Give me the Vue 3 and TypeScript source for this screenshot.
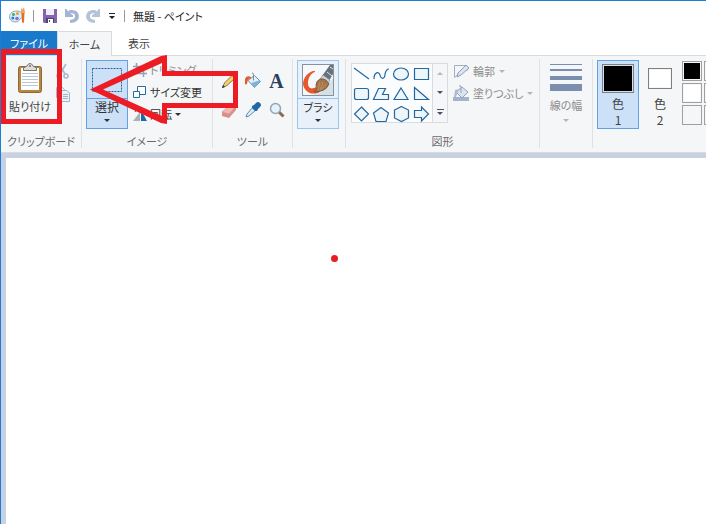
<script setup lang="ts">
import { ref } from 'vue'

interface Shape {
  name: string
  d: string
}

const shapes: Shape[] = [
  { name: '直線', d: 'M2 4L17 15' },
  { name: '曲線', d: 'M2 15C2 8 7 7 8 11C9 16 13 15 13 10C14 6 15 5 17 5' },
  { name: '楕円', d: 'M1.500 10A7.500 6 0 1 0 16.500 10A7.500 6 0 1 0 1.500 10Z' },
  { name: '四角形', d: 'M2.500 4.500H16.500V15.500H2.500Z' },
  { name: '角丸四角形', d: 'M4.500 4.500H14.500Q16.500 4.500 16.500 6.500V13.500Q16.500 15.500 14.500 15.500H4.500Q2.500 15.500 2.500 13.500V6.500Q2.500 4.500 4.500 4.500Z' },
  { name: '多角形', d: 'M6.500 4.500H13.500L10.500 10.500H16.500V15.500H1.500Z' },
  { name: '三角形', d: 'M9 4L16 15.500H2Z' },
  { name: '直角三角形', d: 'M2.500 3.500L16.500 15.500H2.500Z' },
  { name: 'ひし形', d: 'M9.500 3L16.500 10L9.500 17L2.500 10Z' },
  { name: '五角形', d: 'M9 3.500L16.500 9L14 17.500H4L1.500 9Z' },
  { name: '六角形', d: 'M9.500 2.500L16.500 6V14L9.500 17.500L2.500 14V6Z' },
  { name: '右矢印', d: 'M2.500 6.500H9.500V3L16.500 10L9.500 17V13.500H2.500Z' },
]

const palette = ['#000000', '#7f7f7f', '#ffffff', '#c3c3c3', '#f5f6f7', '#f5f6f7']
const activeColor = ref(1)
</script>

<template>
  <div class="window">
    <header class="titlebar">
      <svg class="app-icon" width="18" height="18" viewBox="0 0 18 18">
        <path d="M.5 10C.5 6 4 4 8 4C11 4 13 5 13.500 8C14 11 12 11 11 12C10 14 9 15 6 15C3 15 .5 13 .5 10Z" fill="#d9ecf7" stroke="#85aec8" />
        <circle cx="4.500" cy="7.500" r="1.500" fill="#58a852" />
        <circle cx="8.500" cy="6.500" r="1.500" fill="#e8a02c" />
        <circle cx="3.800" cy="11" r="1.500" fill="#2f7fd0" />
        <circle cx="8" cy="11.500" r="1.800" fill="#8b6fc0" />
        <path d="M12 1L13.500 2.500L14.500 .5L15.500 2L16 6H12Z" fill="#efa65a" />
        <path d="M12.500 6H15.500L15 15Q14 17 13 15Z" fill="#e0702a" />
      </svg>
      <span class="bar"></span>
      <button class="quick" aria-label="上書き保存">
        <svg width="16" height="16" viewBox="0 0 16 16">
          <path d="M1 1H15V15H2L1 14Z" fill="#8563b4" />
          <path d="M4 1H12V7H4Z" fill="#f1edf8" />
          <path d="M4 10H12V15H4Z" fill="#4e4468" />
          <path d="M6 11H11V15H6Z" fill="#fff" />
          <path d="M7 12H8V14H7Z" fill="#4e4468" />
        </svg>
      </button>
      <button class="quick" aria-label="元に戻す">
        <svg width="16" height="16" viewBox="0 0 16 16">
          <path d="M1 1V9H9V7L6 5.500Q11 4.500 11 8.500Q11 11.500 6 12V15Q15 14.500 15 8Q14 1 6 2L4 3.500L2.500 1Z" fill="#a3b5d2" />
        </svg>
      </button>
      <button class="quick" aria-label="やり直し">
        <svg width="16" height="16" viewBox="0 0 16 16">
          <path d="M14 1V9H6V7L9 5.500Q4 4.500 4 8.500Q4 11.500 9 12V15Q0 14.500 0 8Q1 1 9 2L11 3.500L12.500 1Z" fill="#b5c3d9" />
        </svg>
      </button>
      <button class="customize" aria-label="クイック アクセス ツール バーのカスタマイズ">
        <svg width="8" height="8" viewBox="0 0 8 8"><path d="M1 1H7V2H1ZM1 4H7L4 7Z" fill="#222" /></svg>
      </button>
      <span class="bar"></span>
      <h1>無題 - ペイント</h1>
    </header>

    <nav class="tabs">
      <button class="tab file">ファイル</button>
      <button class="tab home">ホーム</button>
      <button class="tab">表示</button>
    </nav>

    <div class="ribbon">
      <section class="group clipboard">
        <div class="body">
          <button class="paste">
            <svg width="28" height="32" viewBox="0 0 28 32">
              <rect x="2.500" y="4.500" width="23" height="26" rx="2" fill="#b98547" stroke="#94682f" />
              <path d="M5 6H23V28H5Z" fill="#fff" />
              <path d="M6 11.500H22M6 14.500H22M6 17.500H22M6 20.500H22M6 23.500H22" stroke="#b8c6d8" />
              <path d="M7.500 8.500V6L11 4Q12 1.500 14 1.500Q16 1.500 17 4L20.500 6V8.500Z" fill="#dcdcda" stroke="#77756c" />
              <circle cx="14" cy="4" r="1" fill="#77756c" />
            </svg>
            <span>貼り付け</span>
          </button>
          <div class="stack">
            <button class="mini" aria-label="切り取り">
              <svg width="16" height="16" viewBox="0 0 16 16" fill="none" stroke="#a9b5ca" stroke-width="1.600">
                <path d="M4 1L10 11M11 1L5 11" /><circle cx="4" cy="13" r="2" /><circle cx="11" cy="13" r="2" />
              </svg>
            </button>
            <button class="mini" aria-label="コピー">
              <svg width="16" height="16" viewBox="0 0 16 16" fill="#edf1f7" stroke="#a5b4cc">
                <path d="M1.500 1.500H7.500L9.500 3.500V11.500H1.500Z" />
                <path d="M6.500 4.500H12L14.500 7V15.500H6.500ZM8 8.500H13M8 10.500H13M8 12.500H13" />
              </svg>
            </button>
          </div>
        </div>
        <h2>クリップボード</h2>
      </section>

      <section class="group image">
        <div class="body">
          <button class="split select">
            <span class="top">
              <svg width="32" height="26" viewBox="0 0 32 26"><rect x="1.500" y="1.500" width="29" height="23" fill="none" stroke="#24649b" stroke-dasharray="2 1" /></svg>
            </span>
            <span class="bottom">選択<i class="caret"></i></span>
          </button>
          <div class="commands">
            <button class="command off">
              <svg width="14" height="14" viewBox="0 0 14 14" fill="none" stroke="#92a1ba" stroke-width="1.500"><path d="M3.500 0V10.500H14M0 3.500H10.500V14M3 11L13 1" /></svg>
              トリミング
            </button>
            <button class="command">
              <svg width="14" height="14" viewBox="0 0 14 14" fill="#fff" stroke="#246ba6"><path d="M4.500 1.500H12.500V9.500H4.500Z" /><path d="M.5 6.500H6.500V12.500H.5Z" /></svg>
              サイズ変更
            </button>
            <button class="command">
              <svg width="14" height="14" viewBox="0 0 14 14"><path d="M7 5V14H0Z" fill="#a9b0b8" /><path d="M8 3L14 14H8Z" fill="#1e6aa7" /><path d="M2 5Q3 1 7 1" fill="none" stroke="#246ba6" /></svg>
              回転<i class="caret"></i>
            </button>
          </div>
        </div>
        <h2>イメージ</h2>
      </section>

      <section class="group tools">
        <div class="body tool-grid">
          <button aria-label="鉛筆">
            <svg width="18" height="18" viewBox="0 0 18 18"><path d="M2.500 15.500L4.500 11L12 3.500L15 6L7 13.500Z" fill="#f5d36a" stroke="#8a7340" /><path d="M2 16L3 13L5 15Z" fill="#333" /><path d="M12 3.500L13.500 2.500L16 5L15 6Z" fill="#d9887d" stroke="#a8685f" stroke-width=".6" /></svg>
          </button>
          <button aria-label="塗りつぶし">
            <svg width="18" height="18" viewBox="0 0 18 18"><path d="M4 8.500L10.500 3.500L16.500 9.500L10.500 15.500Z" fill="#e3f0fa" stroke="#6594bb" /><path d="M7 11L15 8.500L16.500 9.500L10.500 15.500Z" fill="#80b2d8" /><path d="M9.500 8.500V2.500Q9.500 1 8 1" fill="none" stroke="#7a8794" /><path d="M7 5Q2 3 1 7V12Q3 14 3.500 9Q5 6 7 6Z" fill="#e25c29" /></svg>
          </button>
          <button class="letter" aria-label="テキスト">A</button>
          <button aria-label="消しゴム">
            <svg width="18" height="18" viewBox="0 0 18 18"><path d="M2 11L10 4L16 5L9 13Z" fill="#f3b9b1" stroke="#d0958e" stroke-width=".7" /><path d="M2 11L9 13V17L2 15ZM9 13L16 5V9L9 17Z" fill="#dc8f87" /></svg>
          </button>
          <button aria-label="色の選択">
            <svg width="18" height="18" viewBox="0 0 18 18"><path d="M9 6L12 9L5 15L2 16L3 13Z" fill="#d7eefb" stroke="#5b8baa" /><path d="M8 5L10 4L12 2Q14 0 16 2Q18 4 16 6L14 8L13 10L11 10L8 7Z" fill="#2465a5" /></svg>
          </button>
          <button aria-label="拡大鏡">
            <svg width="18" height="18" viewBox="0 0 18 18"><path d="M11 11L15.500 15.500" stroke="#886b55" stroke-width="3" /><circle cx="7.500" cy="7.500" r="5" fill="#e2f3fd" stroke="#98a6b2" stroke-width="1.500" /></svg>
          </button>
        </div>
        <h2>ツール</h2>
      </section>

      <section class="group brush">
        <div class="body">
          <button class="split brushes">
            <span class="top">
              <svg width="32" height="32" viewBox="0 0 32 32">
                <rect x=".5" y=".5" width="31" height="31" fill="#f5f9fc" stroke="#8a9299" />
                <path d="M31 14V31H9L18 29L27 20Z" fill="#d3e0e8" />
                <path d="M13 7C8 6 1 13 1 20C2 28 10 32 18 28L14 23C9 26 6 24 6 19C6 14 9 9 13 8Z" fill="#e6572a" />
                <path d="M31 1V10L27 17L20 12L28 1Z" fill="#69727c" />
                <path d="M28 3L31 5M25 8L30 12" stroke="#dce6ee" />
                <path d="M21 11L28 16L26 20L18 15Z" fill="#cbd3da" stroke="#78838e" stroke-width=".6" />
                <path d="M18 15Q24 14 27 20Q24 28 12 28Q16 25 14 21Q14 17 18 15Z" fill="#a4744b" stroke="#75502f" stroke-width=".8" />
                <path d="M18 18L16 26M21 18L18 26M24 20L20 25" stroke="#c69a70" stroke-width=".8" />
              </svg>
            </span>
            <span class="bottom">ブラシ<i class="caret"></i></span>
          </button>
        </div>
      </section>

      <section class="group shapes">
        <div class="body">
          <div class="gallery">
            <div class="cells">
              <button v-for="shape in shapes" :key="shape.name" :aria-label="shape.name">
                <svg width="20" height="20" viewBox="0 0 20 20"><path :d="shape.d" :fill="shape.d.endsWith('Z') ? '#edf6fa' : 'none'" stroke="#2467a0" stroke-width="1.200" /></svg>
              </button>
            </div>
            <div class="scroll">
              <button aria-label="上へ"><i class="caret up"></i></button>
              <button aria-label="下へ"><i class="caret"></i></button>
              <button aria-label="その他"><i class="line"></i><i class="caret"></i></button>
            </div>
          </div>
          <div class="commands">
            <button class="command off">
              <svg width="16" height="16" viewBox="0 0 16 16"><path d="M12 2.500H1.500V14.500L14 4V8" fill="none" stroke="#a2afc5" /><path d="M4 14L5 10L13 2L16 5L8 12Z" fill="#dce4ef" stroke="#8d9db8" /></svg>
              輪郭<i class="caret"></i>
            </button>
            <button class="command off">
              <svg width="16" height="16" viewBox="0 0 16 16"><path d="M0 12H16V16H0Z" fill="#a4b4cd" /><path d="M3 7L9 2L15 7L9 13Z" fill="#dbe3ee" stroke="#8fa1bd" /><path d="M8 8V2Q8 0 6 1" stroke="#8fa1bd" fill="none" /><path d="M2 5L6 4L3 12H1Z" fill="#aebbd0" /></svg>
              塗りつぶし<i class="caret"></i>
            </button>
          </div>
        </div>
        <h2>図形</h2>
      </section>

      <section class="group stroke">
        <div class="body">
          <button class="size" disabled>
            <svg width="32" height="28" viewBox="0 0 32 28"><path d="M0 1H32V2H0ZM0 6H32V8H0ZM0 13H32V17H0ZM0 21H32V28H0Z" fill="#7b8eaf" /></svg>
            <span>線の幅</span>
            <i class="caret"></i>
          </button>
        </div>
      </section>

      <section class="group colors">
        <div class="body">
          <button class="color" :class="{ active: activeColor === 1 }" @click="activeColor = 1">
            <span class="swatch black"></span><span>色<br />1</span>
          </button>
          <button class="color" :class="{ active: activeColor === 2 }" @click="activeColor = 2">
            <span class="swatch white"></span><span>色<br />2</span>
          </button>
          <div class="palette">
            <button v-for="(tone, index) in palette" :key="index" :style="{ backgroundColor: tone }" :aria-label="`色見本 ${index + 1}`"></button>
          </div>
        </div>
      </section>
    </div>

    <main class="workspace">
      <div class="canvas"></div>
    </main>

    <svg class="marks" width="340" height="270" viewBox="0 0 340 270">
      <rect x="3.500" y="51.500" width="56" height="70" fill="none" stroke="#ed1c24" stroke-width="5" />
      <path fill="#ed1c24" fill-rule="evenodd" d="M90 89.500L161 56L167 55V71H238V108H167V124L161 123ZM103 89.500L162 116V103H233V76H162V63Z" />
      <circle cx="334.500" cy="258.500" r="3.500" fill="#ed1c24" />
    </svg>
  </div>
</template>

<style>
body {
  margin: 0;
  overflow: hidden;
}
</style>

<style scoped>
.window {
  position: relative;
  box-sizing: border-box;
  display: flex;
  flex-direction: column;
  min-height: 100vh;
  overflow: hidden;
  border-top: 1px solid #1a7fd4;
  border-left: 1px solid #1a7fd4;
  background: #fff;
  color: #444;
  font: 11px/16px "Noto Sans CJK JP", sans-serif;
  font-feature-settings: "palt";
}
button {
  box-sizing: border-box;
  margin: 0;
  padding: 0;
  border: 0;
  background: none;
  color: inherit;
  font: inherit;
  font-feature-settings: inherit;
  white-space: nowrap;
}
svg {
  display: block;
  flex: none;
}
h1,
h2 {
  margin: 0;
  font-size: 11px;
  font-weight: 400;
  white-space: nowrap;
}
.titlebar {
  display: flex;
  align-items: center;
  height: 30px;
  padding-left: 8px;
}
.bar {
  width: 1px;
  height: 12px;
  margin: 0 8px 0 6px;
  background: #999;
}
.quick {
  width: 16px;
  margin-right: 6px;
}
.customize {
  width: 8px;
  margin-right: 2px;
}
h1 {
  color: #222;
}
.tabs {
  display: flex;
  height: 24px;
}
.tab {
  width: 54px;
  height: 24px;
}
.file {
  width: 56px;
  background: #1979ca;
  color: #fff;
}
.home {
  width: 55px;
  height: 25px;
  position: relative;
  z-index: 1;
  border: 1px solid #dadbdc;
  border-bottom: 0;
  background: #f5f6f7;
}
.ribbon {
  display: flex;
  box-sizing: border-box;
  height: 98px;
  padding: 3px 0 4px;
  border-top: 1px solid #dadbdc;
  border-bottom: 1px solid #dadbdc;
  background: #f5f6f7;
}
.group {
  box-sizing: border-box;
  display: flex;
  flex: none;
  flex-direction: column;
  justify-content: space-between;
  border-right: 1px solid #e0e1e3;
}
.body {
  display: flex;
  padding: 1px 4px 0;
}
.group h2 {
  color: #6a6a6a;
  line-height: 14px;
  text-align: center;
}
.clipboard {
  width: 81px;
}
.image {
  width: 131px;
}
.tools {
  width: 80px;
}
.brush {
  width: 53px;
}
.shapes {
  width: 194px;
}
.stroke {
  width: 53px;
}
.colors {
  width: 180px;
}
.paste {
  display: flex;
  flex-direction: column;
  align-items: center;
  gap: 4px;
  width: 50px;
  padding-top: 2px;
}
.stack {
  display: flex;
  flex-direction: column;
  gap: 7px;
  padding-top: 3px;
}
.split {
  display: flex;
  flex-direction: column;
  width: 42px;
  height: 69px;
  border: 1px solid #62a2e4;
  background: #cce0f7;
}
.select,
.color {
  font-size: 12px;
}
.top {
  display: flex;
  align-items: center;
  justify-content: center;
  width: 100%;
  height: 37px;
  border-bottom: 1px solid #62a2e4;
}
.bottom {
  display: flex;
  flex-direction: column;
  align-items: center;
  gap: 4px;
  width: 100%;
  color: #333;
}
.caret {
  display: inline-block;
  border: 3px solid transparent;
  border-top-color: currentColor;
  border-bottom: 0;
}
.caret.up {
  border-top: 0;
  border-bottom: 3px solid #b3b8c1;
}
.commands {
  display: flex;
  flex-direction: column;
  gap: 6px;
  padding: 2px 0 0 5px;
}
.command {
  display: flex;
  align-items: center;
  gap: 3px;
  height: 16px;
  color: #333;
}
.command.off {
  color: #8d8d8d;
}
.off .caret {
  border-top-color: #b5b5b5;
}
.tool-grid {
  display: grid;
  grid-template-columns: repeat(3, 18px);
  justify-content: center;
  gap: 11px 6px;
  padding-top: 13px;
}
.letter {
  color: #27405f;
  font: bold 20px/18px "Liberation Serif", serif;
}
.brushes {
  border-color: #98c6f2;
  background: #e8f0fa;
}
.brushes .top {
  border-color: #98c6f2;
}
.shapes .body {
  padding-top: 4px;
  padding-left: 5px;
}
.shapes .commands {
  padding-top: 0;
}
.shapes .command {
  gap: 4px;
}
.gallery {
  box-sizing: border-box;
  display: flex;
  width: 97px;
  height: 60px;
  border: 1px solid #dadbdc;
  background: #fbfcfd;
}
.cells {
  display: grid;
  grid-template-columns: repeat(4, 20px);
  grid-template-rows: repeat(3, 20px);
}
.scroll {
  display: grid;
  flex: 1;
  grid-template-rows: repeat(3, 1fr);
  border-left: 1px solid #dadbdc;
  background: #f5f6f7;
  color: #44526a;
}
.scroll button {
  display: flex;
  flex-direction: column;
  align-items: center;
  justify-content: center;
  gap: 2px;
}
.line {
  width: 7px;
  height: 1px;
  background: currentColor;
}
.size {
  display: flex;
  flex-direction: column;
  align-items: center;
  gap: 6px;
  width: 44px;
  padding-top: 3px;
  color: #8d8d8d;
}
.size .caret {
  border-top-color: #b5b5b5;
}
.color {
  display: flex;
  flex-direction: column;
  align-items: center;
  gap: 3px;
  width: 42px;
  height: 69px;
  padding-top: 3px;
  border: 1px solid transparent;
}
.color.active {
  border-color: #62a2e4;
  background: #cce0f7;
}
.swatch {
  box-sizing: border-box;
  display: block;
  width: 32px;
  height: 32px;
  padding: 1px;
  border: 1px solid #7f7f7f;
  background-clip: content-box;
}
.black {
  background-color: #000;
}
.white {
  width: 24px;
  height: 24px;
  margin: 4px 0;
  background-color: #fff;
}
.palette {
  display: grid;
  grid-template-columns: repeat(2, 20px);
  grid-auto-rows: 20px;
  gap: 2px;
  padding: 1px 0 0 1px;
}
.palette button {
  padding: 1px;
  border: 1px solid #a0a0a0;
  background-clip: content-box;
}
.workspace {
  display: flex;
  flex: 1;
  padding: 5px 0 0 5px;
  background: #c8d1e1;
}
.canvas {
  flex: 1;
  background: #fff;
}
.marks {
  position: absolute;
  top: -1px;
  left: -1px;
  pointer-events: none;
  z-index: 2;
}
</style>
